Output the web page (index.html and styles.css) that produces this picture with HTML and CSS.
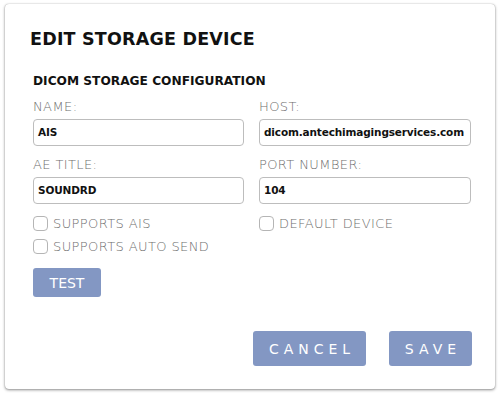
FILE: index.html
```html
<!DOCTYPE html>
<html>
<head>
<meta charset="utf-8">
<link rel="stylesheet" href="styles.css">
</head>
<body>
<div class="dialog">
  <h1 class="title">EDIT STORAGE DEVICE</h1>
  <h2 class="subtitle">DICOM STORAGE CONFIGURATION</h2>
  <div class="grid">
    <div class="field">
      <label class="label">NAME:</label>
      <div class="input">AIS</div>
    </div>
    <div class="field">
      <label class="label">HOST:</label>
      <div class="input">dicom.antechimagingservices.com</div>
    </div>
    <div class="field">
      <label class="label">AE TITLE:</label>
      <div class="input">SOUNDRD</div>
    </div>
    <div class="field">
      <label class="label">PORT NUMBER:</label>
      <div class="input">104</div>
    </div>
    <div class="checks">
      <div class="check"><span class="box"></span>SUPPORTS AIS</div>
      <div class="check"><span class="box"></span>SUPPORTS AUTO SEND</div>
    </div>
    <div class="checks">
      <div class="check"><span class="box"></span>DEFAULT DEVICE</div>
    </div>
  </div>
  <button class="btn btn-test">TEST</button>
  <div class="actions">
    <button class="btn btn-wide">CANCEL</button>
    <button class="btn btn-wide btn-save">SAVE</button>
  </div>
</div>
</body>
</html>
```
FILE: styles.css
```css
html, body {
  margin: 0;
  padding: 0;
  background: #fff;
}
body {
  font-family: "DejaVu Sans", sans-serif;
  width: 500px;
  height: 397px;
  overflow: hidden;
}
.dialog {
  box-sizing: border-box;
  margin: 4px 0 0 5px;
  width: 490px;
  height: 385px;
  background: #fff;
  border-radius: 4px;
  box-shadow: 0 1px 3px rgba(0,0,0,0.45), 0 0 1px rgba(0,0,0,0.3);
  padding: 25px 23px 0 25px;
}
.title {
  margin: 0;
  font-size: 17.5px;
  font-weight: bold;
  color: #111;
  line-height: 20px;
  letter-spacing: 0.2px;
}
.subtitle {
  margin: 25px 0 0 3px;
  font-size: 12.2px;
  font-weight: bold;
  color: #111;
  line-height: 14px;
}
.grid {
  margin: 11px 0 0 3px;
  display: grid;
  grid-template-columns: 211px 212px;
  column-gap: 15px;
  row-gap: 11px;
}
.label {
  display: block;
  font-size: 13px;
  color: #6e6e6e;
  font-weight: 300;
  line-height: 16px;
  letter-spacing: 0.4px;
  margin-bottom: 4px;
}
.input {
  box-sizing: border-box;
  height: 27px;
  border: 1px solid #bdbdbd;
  border-radius: 4px;
  padding: 0 4px;
  font-size: 10.5px;
  letter-spacing: -0.15px;
  font-weight: bold;
  color: #111;
  line-height: 25px;
  white-space: nowrap;
  overflow: hidden;
}
.checks {
  display: flex;
  flex-direction: column;
  gap: 7.5px;
  margin-top: 1px;
}
.check {
  display: flex;
  align-items: center;
  font-size: 13px;
  letter-spacing: 0.4px;
  font-weight: 300;
  color: #6e6e6e;
  line-height: 15px;
}
.box {
  box-sizing: border-box;
  width: 15px;
  height: 15px;
  border: 1px solid #b5b5b5;
  border-radius: 4px;
  margin-right: 5px;
}
.btn {
  border: none;
  background: #8397c3;
  color: #fff;
  font-family: "DejaVu Sans", sans-serif;
  font-weight: normal;
  border-radius: 3px;
  cursor: pointer;
}
.btn-test {
  display: block;
  margin: 14.5px 0 0 3px;
  width: 68px;
  height: 29px;
  font-size: 14px;
  padding: 0;
}
.actions {
  display: flex;
  justify-content: flex-end;
  gap: 23px;
  margin-top: 34px;
}
.btn-wide {
  height: 35px;
  width: 113px;
  font-size: 14px;
  letter-spacing: 5px;
  padding: 0 0 0 5px;
}
.btn-save {
  width: 83px;
}
```
